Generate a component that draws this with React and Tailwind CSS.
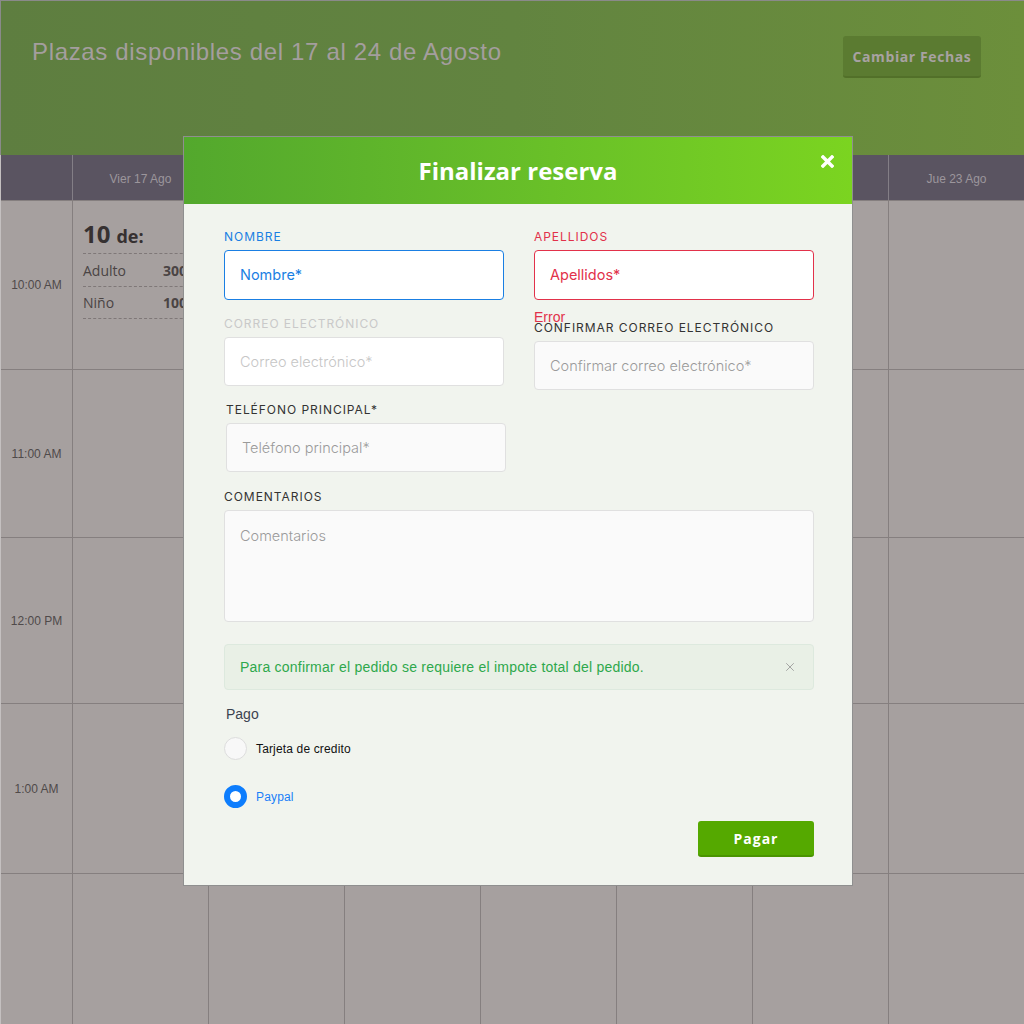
import { X } from "lucide-react";

const days = ["Vier 17 Ago", "", "", "", "", "", "Jue 23 Ago"];
const rows = [
  { time: "10:00 AM", h: "h-[169px]" },
  { time: "11:00 AM", h: "h-[168px]" },
  { time: "12:00 PM", h: "h-[166px]" },
  { time: "1:00 AM", h: "h-[170px]" },
  { time: "", h: "h-[151px]" },
];

const labelCls = "text-[12px] leading-[14px] tracking-[0.08em] font-['Inter',sans-serif]";
const inputCls =
  "w-full rounded-[4px] border px-[15px] text-[14.5px] font-['Inter',sans-serif] flex items-center";

const Slot = ({ first }) => (
  <div className="px-[10px] pt-[20px] text-[#4a4444] font-['Open_Sans',sans-serif] whitespace-nowrap overflow-hidden">
    {first && (
      <div>
        <div className="flex items-baseline gap-[6px] pb-[4px] border-b border-dashed border-[#7f7878] leading-[26px]">
          <span className="text-[24px] font-bold text-[#363131]">10</span>
          <span className="text-[18px] font-bold text-[#363131]">de:</span>
        </div>
        <div className="flex h-[33px] items-center border-b border-dashed border-[#7f7878] text-[14px]">
          <span className="w-[80px]">Adulto</span>
          <span className="font-bold">300</span>
        </div>
        <div className="flex h-[32px] items-center border-b border-dashed border-[#7f7878] text-[14px]">
          <span className="w-[80px]">Niño</span>
          <span className="font-bold">100</span>
        </div>
      </div>
    )}
  </div>
);

const App = () => {
  return (
    <div className="relative w-[1024px] h-[1024px] overflow-hidden bg-[#a6a09f] font-['Liberation_Sans',sans-serif]">
      {/* top banner */}
      <div className="h-[155px] border-t border-l border-[#8a8a8a] bg-gradient-to-r from-[#5e7e40] via-[#628440] to-[#6c8f3b] flex items-start justify-between pl-[31px] pr-[43px]">
        <h1 className="mt-[36px] text-[24px] leading-[30px] tracking-[0.65px] text-[#a49e9e]">
          Plazas disponibles del 17 al 24 de Agosto
        </h1>
        <button className="mt-[35px] h-[42px] w-[138px] rounded-[3px] bg-[#5b7b31] border-b-2 border-[#527029] text-[14px] font-bold tracking-[0.6px] text-[#a8a2a2] font-['Open_Sans',sans-serif]">
          Cambiar Fechas
        </button>
      </div>

      {/* calendar */}
      <div className="grid w-[1025px] grid-cols-[72px_repeat(7,136px)] border-l border-[#c4c0c0]">
        <div className="h-[45px] bg-[#5a5461] border-r border-[#837e86]" />
        {days.map((d, i) => (
          <div
            key={i}
            className="h-[45px] pt-[2px] bg-[#5a5461] border-r border-[#837e86] flex items-center justify-center text-[12px] text-[#9c969c]"
          >
            {d}
          </div>
        ))}
        {rows.map((r, ri) => (
          <div key={ri} className="contents">
            <div className={`${r.h} border-r border-t border-[#857f7f] flex items-center justify-center text-[12px] text-[#4f4a4a]`}>
              {r.time}
            </div>
            {days.map((_, ci) => (
              <div key={ci} className={`${r.h} border-r border-t border-[#857f7f]`}>
                <Slot first={ri === 0 && ci === 0} />
              </div>
            ))}
          </div>
        ))}
      </div>

      {/* modal */}
      <div className="absolute left-[183px] top-[136px] w-[670px] h-[750px] border border-[#8f8f8f] bg-[#f1f4ee]">
        <div className="relative h-[67px] bg-gradient-to-r from-[#53a82d] to-[#7bd420] flex items-center justify-center">
          <h2 className="text-[24px] font-bold text-white font-['Open_Sans',sans-serif]">Finalizar reserva</h2>
          <svg className="absolute right-[18px] top-[18px]" width="13" height="13" viewBox="0 0 13 13">
            <path d="M2 2 L11 11 M11 2 L2 11" stroke="white" strokeWidth="3.4" strokeLinecap="square" />
          </svg>
        </div>

        <div className="pl-[40px] pr-[38px] pt-[26px] flex flex-col">
          <div className="flex gap-[30px]">
            <div className="w-[280px]">
              <div className={`${labelCls} text-[#1a7fe3]`}>NOMBRE</div>
              <div className={`${inputCls} mt-[6px] h-[50px] bg-white border-[#1a7fe3] text-[#1a7fe3]`}>Nombre*</div>
            </div>
            <div className="w-[280px]">
              <div className={`${labelCls} text-[#e2314a]`}>APELLIDOS</div>
              <div className={`${inputCls} mt-[6px] h-[50px] bg-white border-[#e2314a] text-[#e2314a]`}>Apellidos*</div>
            </div>
          </div>

          <div className="flex gap-[30px] items-start mt-[10px]">
            <div className="w-[280px] pt-[7px]">
              <div className={`${labelCls} text-[#c9c9c9]`}>CORREO ELECTRÓNICO</div>
              <div className={`${inputCls} mt-[6px] h-[49px] bg-white border-[#e0e0e0] text-[#c6c6c6] font-light`}>Correo electrónico*</div>
            </div>
            <div className="w-[280px]">
              <div className="text-[14px] leading-[14px] text-[#e2314a]">Error</div>
              <div className={`${labelCls} -mt-[3px] text-[#333]`}>CONFIRMAR CORREO ELECTRÓNICO</div>
              <div className={`${inputCls} mt-[6px] h-[49px] bg-[#fafafa] border-[#e0e0e0] text-[#9a9a9a] font-light`}>Confirmar correo electrónico*</div>
            </div>
          </div>

          <div className="w-[280px] ml-[2px] mt-[13px]">
            <div className={`${labelCls} text-[#333]`}>TELÉFONO PRINCIPAL*</div>
            <div className={`${inputCls} mt-[6px] h-[49px] bg-[#fafafa] border-[#e0e0e0] text-[#9a9a9a] font-light`}>Teléfono principal*</div>
          </div>

          <div className="mt-[18px]">
            <div className={`${labelCls} text-[#333]`}>COMENTARIOS</div>
            <div className="mt-[6px] h-[112px] rounded-[4px] border border-[#e0e0e0] bg-[#fafafa] px-[15px] pt-[15px] text-[14.5px] leading-[20px] text-[#9a9a9a] font-light font-['Inter',sans-serif]">
              Comentarios
            </div>
          </div>

          <div className="mt-[22px] h-[46px] rounded-[4px] border border-[#dde9de] bg-[#e9f0e6] flex items-center justify-between pl-[15px] pr-[16px]">
            <span className="text-[14px] tracking-[0.22px] text-[#2ea84c]">Para confirmar el pedido se requiere el impote total del pedido.</span>
            <X size={14} strokeWidth={1.5} className="text-[#9a9a9a]" />
          </div>

          <div className="mt-[16px] ml-[2px] text-[14px] leading-[16px] text-[#3c4350]">Pago</div>

          <div className="mt-[15px] flex items-center gap-[9px]">
            <span className="w-[23px] h-[23px] rounded-full border border-[#dddddd] bg-[#f8f8f8]" />
            <span className="text-[12px] tracking-[0.15px] text-[#111]">Tarjeta de credito</span>
          </div>
          <div className="mt-[25px] flex items-center gap-[9px]">
            <span className="w-[23px] h-[23px] rounded-full border-[6px] border-[#0d7dfd] bg-white" />
            <span className="text-[12px] tracking-[0.15px] text-[#1a80f8]">Paypal</span>
          </div>

          <button className="self-end mt-[13px] h-[36px] w-[116px] rounded-[3px] bg-[#55a900] border-b-2 border-[#4a9400] text-[14px] font-bold tracking-[1px] text-white font-['Open_Sans',sans-serif]">
            Pagar
          </button>
        </div>
      </div>
    </div>
  );
};

export default App;
